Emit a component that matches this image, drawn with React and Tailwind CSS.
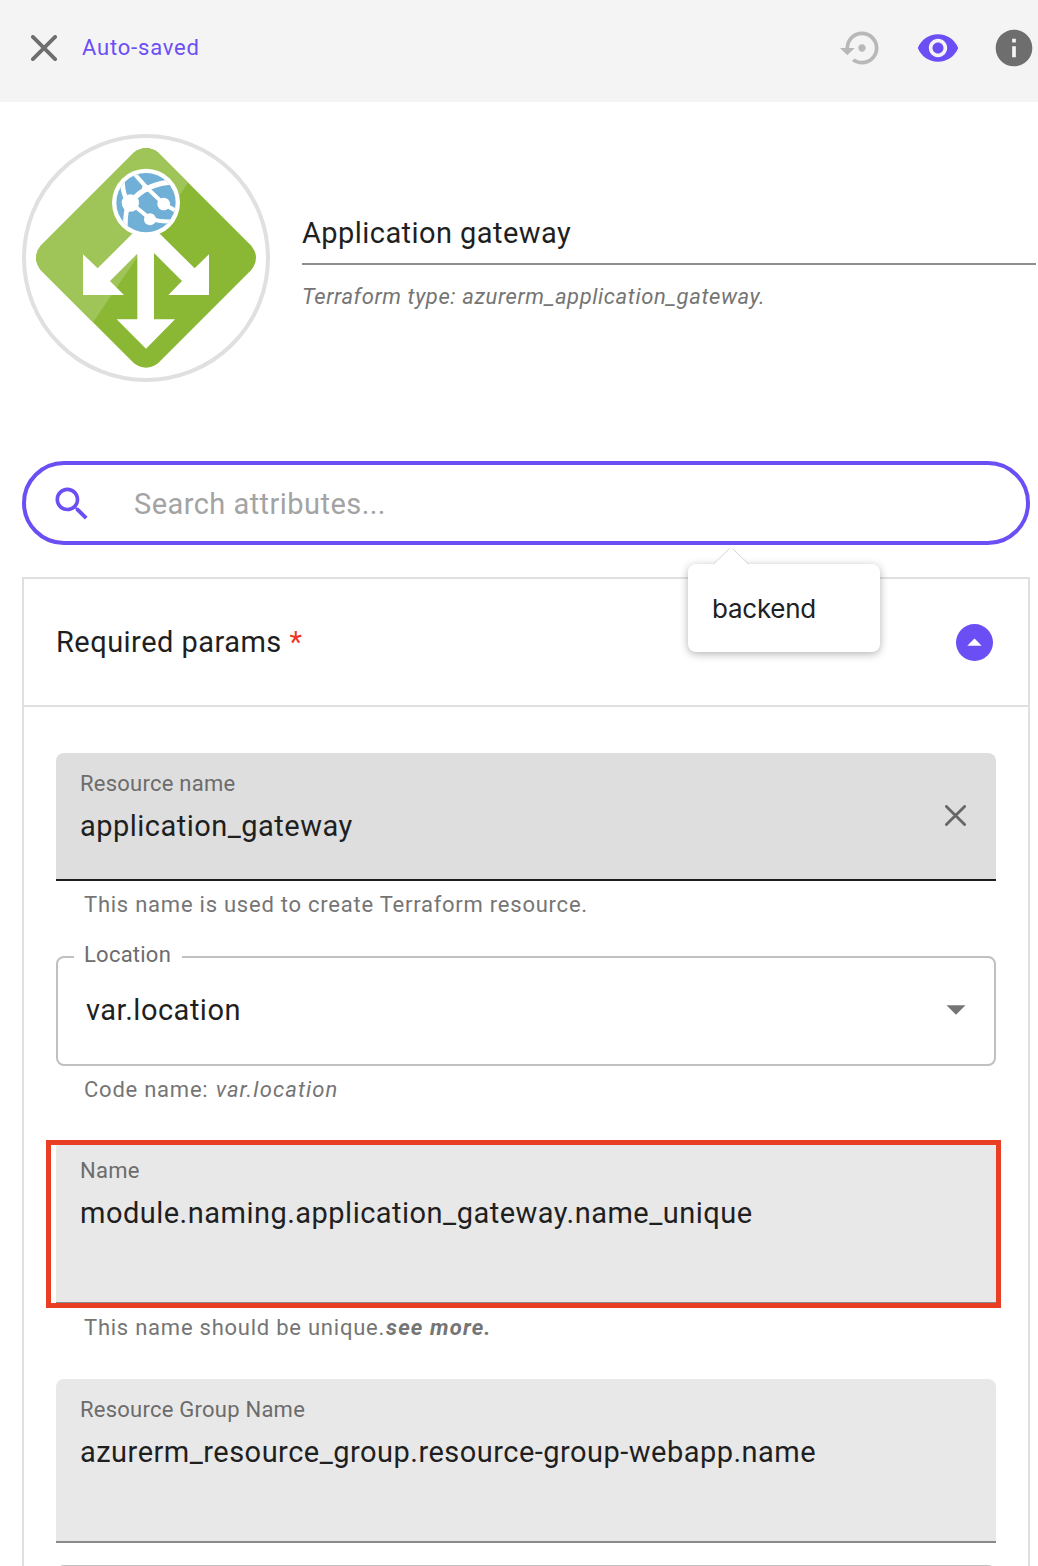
import React from "react";

function CloseIcon({ size, stroke }) {
  return (
    <svg width={size} height={size} viewBox={`0 0 ${size} ${size}`} fill="none" stroke="currentColor" strokeWidth={stroke} strokeLinecap="round">
      <path d={`M${stroke / 2} ${stroke / 2}L${size - stroke / 2} ${size - stroke / 2}M${size - stroke / 2} ${stroke / 2}L${stroke / 2} ${size - stroke / 2}`} />
    </svg>
  );
}

function Header() {
  return (
    <header className="flex h-[102px] shrink-0 items-center bg-[#f4f4f4] pr-0.5 pb-1.5 pl-[31px]">
      <span className="text-[#6e6e6e]"><CloseIcon size={26} stroke={3.8} /></span>
      <span className="ml-[25px] text-[22px] leading-6 tracking-[0.8px] text-[#6c4ef5]">Auto-saved</span>
      <div className="ml-auto flex gap-8">
        <svg className="size-11 text-[#b8b8b8]" viewBox="0 0 24 24" fill="currentColor">
          <path d="M14 12c0-1.1-.9-2-2-2s-2 .9-2 2 .9 2 2 2 2-.9 2-2zm-2-9c-4.97 0-9 4.03-9 9H0l4 4 4-4H5c0-3.87 3.13-7 7-7s7 3.13 7 7-3.13 7-7 7c-1.51 0-2.91-.49-4.06-1.3l-1.42 1.44C8.04 20.3 9.94 21 12 21c4.97 0 9-4.03 9-9s-4.03-9-9-9z" />
        </svg>
        <svg className="size-11 text-[#6c4ef5]" viewBox="0 0 24 24" fill="currentColor">
          <path d="M12 4.5C7 4.5 2.73 7.61 1 12c1.73 4.39 6 7.5 11 7.5s9.27-3.11 11-7.5c-1.73-4.39-6-7.5-11-7.5zM12 17c-2.76 0-5-2.24-5-5s2.24-5 5-5 5 2.24 5 5-2.24 5-5 5zm0-8c-1.66 0-3 1.34-3 3s1.34 3 3 3 3-1.34 3-3-1.34-3-3-3z" />
        </svg>
        <svg className="size-11 text-[#6e6e6e]" viewBox="0 0 24 24" fill="currentColor">
          <path d="M12 2C6.48 2 2 6.48 2 12s4.48 10 10 10 10-4.48 10-10S17.52 2 12 2zm1 15h-2v-6h2v6zm0-8h-2V7h2v2z" />
        </svg>
      </div>
    </header>
  );
}

const DIAMOND = "M371 98Q408 70 445 98L724 377Q752 412 724 450L445 729Q408 757 371 729L92 450Q64 412 92 377Z";

function GatewayLogo() {
  return (
    <svg className="size-[248px] shrink-0" viewBox="36 42 744 744">
      <defs>
        <clipPath id="diamond"><path d={DIAMOND} /></clipPath>
        <clipPath id="globe"><circle cx="408" cy="248" r="89" /></clipPath>
      </defs>
      <circle cx="408" cy="414" r="366" fill="#fff" stroke="#e0e0e0" strokeWidth="12" />
      <path d={DIAMOND} fill="#8ab835" />
      <path d="M36 42H636L535 187L248 608L36 786Z" fill="#9fc458" clipPath="url(#diamond)" />
      <path d="M366 342H450L554 445L597 403V525H475L516 483L432 399V598H495L408 686L320 598H382V401L300 483L342 525H219V403L263 445Z" fill="#fff" />
      <circle cx="408" cy="248" r="102" fill="#fff" />
      <circle cx="408" cy="248" r="89" fill="#70b0d6" />
      <g clipPath="url(#globe)" stroke="#fff" fill="none">
        <path d="M362 248Q404 190 496 185" strokeWidth="16" />
        <path d="M372 160L410 203L461 252L504 276" strokeWidth="12" />
        <path d="M339 170Q333 215 356 248Q343 286 347 340" strokeWidth="14" />
        <path d="M362 248L420 296Q455 308 500 303" strokeWidth="12" />
        <g fill="#fff" stroke="none">
          <circle cx="361" cy="249" r="26" />
          <circle cx="461" cy="252" r="19" />
          <circle cx="420" cy="298" r="18" />
          <circle cx="407" cy="205" r="11" />
        </g>
      </g>
    </svg>
  );
}

function Suggestion() {
  return (
    <div className="absolute top-[99px] left-[662px] z-10 h-[88px] w-[192px] rounded-lg bg-white pt-[29px] pl-6 shadow-[0_2px_8px_rgba(0,0,0,0.3)]">
      <svg className="absolute -top-4 left-6" width="38" height="17" viewBox="0 0 38 17">
        <path d="M1 17L17.500 .5H20.500L37 17Z" fill="#fff" />
        <path d="M1.500 16L17.500 .5M20.500 .5L36.500 16" stroke="#d4d4d4" fill="none" />
      </svg>
      <p className="font-[Inter,sans-serif] text-[26px] leading-8 tracking-[-0.25px] text-[#202124]">backend</p>
    </div>
  );
}

function SearchBox() {
  return (
    <div className="relative mt-[79px] flex h-[84px] shrink-0 items-center rounded-full border-4 border-[#6c4ef5] pt-0.5 pl-6">
      <svg className="size-11 text-[#6c4ef5]" viewBox="0 0 24 24" fill="currentColor">
        <path d="M15.500 14h-.79l-.28-.27C15.410 12.590 16 11.110 16 9.500 16 5.910 13.090 3 9.500 3S3 5.910 3 9.500 5.910 16 9.500 16c1.610 0 3.090-.59 4.230-1.570l.27.28v.79l5 4.990L20.490 19l-4.990-5zm-6 0C7.010 14 5 11.990 5 9.500S7.010 5 9.500 5 14 7.010 14 9.500 11.990 14 9.500 14z" />
      </svg>
      <span className="ml-10 text-[29px] leading-8 tracking-[0.45px] text-[#a3a3a3]">Search attributes...</span>
      <Suggestion />
    </div>
  );
}

function FilledField({ label, value, active, highlighted }) {
  return (
    <div className={`relative flex shrink-0 items-start rounded-t-lg border-b-2 px-6 ${active ? "h-32 border-[#1d1d1d] bg-[#dedede]" : "h-[164px] border-[#8a8a8a] bg-[#e8e8e8]"}`}>
      <div className="pt-[19px]">
        <p className="text-[22px] leading-6 tracking-[0.24px] text-[#6c6c6c]">{label}</p>
        <p className="mt-[14px] text-[29px] leading-8 tracking-[0.48px] text-[#1f1f1f]">{value}</p>
      </div>
      {active && <span className="mt-[52px] mr-1.5 ml-auto text-[#666]"><CloseIcon size={21} stroke={2.8} /></span>}
      {highlighted && <div className="absolute top-0 -right-[5px] -bottom-[6px] -left-[10px] border-[5px] border-[#e93e24]" />}
    </div>
  );
}

function Helper({ className, children }) {
  return <p className={`shrink-0 pt-3 pl-7 text-[22px] leading-6 tracking-[0.76px] text-[#757575] ${className}`}>{children}</p>;
}

function LocationSelect() {
  return (
    <div className="relative flex h-[110px] shrink-0 items-center justify-between rounded-lg border-2 border-[#c0c0c0] bg-white px-7 pb-0.5">
      <span className="absolute -top-[15px] left-4 bg-white pr-[11px] pl-[10px] text-[22px] leading-6 tracking-[0.24px] text-[#6c6c6c]">Location</span>
      <span className="text-[29px] leading-8 tracking-[0.5px] text-[#1f1f1f]">var.location</span>
      <svg width="20" height="10" viewBox="0 0 20 10" fill="#757575"><path d="M.5 .3H19.500L10 9.800Z" /></svg>
    </div>
  );
}

export default function App() {
  return (
    <div className="flex h-[1566px] w-[1038px] flex-col overflow-hidden bg-white font-[Roboto,sans-serif]">
      <Header />
      <main className="flex min-h-0 grow flex-col pt-8 pr-2 pl-[22px]">
        <section className="-mr-1.5 flex shrink-0 gap-8">
          <GatewayLogo />
          <div className="grow pt-[83px]">
            <div className="h-12 border-b-2 border-[#8e8e8e] text-[29px] leading-8 tracking-[0.44px] text-[#1f1f1f]">Application gateway</div>
            <p className="mt-5 text-[22px] leading-6 tracking-[0.6px] text-[#757575] italic">Terraform type: azurerm_application_gateway.</p>
          </div>
        </section>
        <SearchBox />
        <section className="mt-8 flex min-h-0 grow flex-col border-2 border-b-0 border-[#e0e0e0]">
          <div className="flex h-32 shrink-0 items-center justify-between border-b-2 border-[#e0e0e0] pr-[35px] pl-8">
            <h2 className="text-[29px] leading-8 tracking-[0.47px] text-[#1f1f1f]">Required params <span className="text-[#ee3524]">*</span></h2>
            <span className="flex size-[37px] items-center justify-center rounded-full bg-[#6c4ef5]">
              <svg width="15" height="8" viewBox="0 0 15 8" fill="#fff"><path d="M.3 7.700H14.700L7.500 .5Z" /></svg>
            </span>
          </div>
          <div className="flex flex-col px-8 pt-[46px]">
            <FilledField label="Resource name" value="application_gateway" active />
            <Helper className="h-[75px]">This name is used to create Terraform resource.</Helper>
            <LocationSelect />
            <Helper className="h-[74px]">Code name: <em className="ml-px tracking-[1.1px]">var.location</em></Helper>
            <FilledField label="Name" value="module.naming.application_gateway.name_unique" highlighted />
            <Helper className="h-[75px]">This name should be unique.<strong className="ml-px font-bold tracking-[1.15px] italic">see more.</strong></Helper>
            <FilledField label="Resource Group Name" value="azurerm_resource_group.resource-group-webapp.name" />
            <div className="mt-[22px] h-28 shrink-0 rounded-lg border-2 border-[#c0c0c0]" />
          </div>
        </section>
      </main>
    </div>
  );
}
